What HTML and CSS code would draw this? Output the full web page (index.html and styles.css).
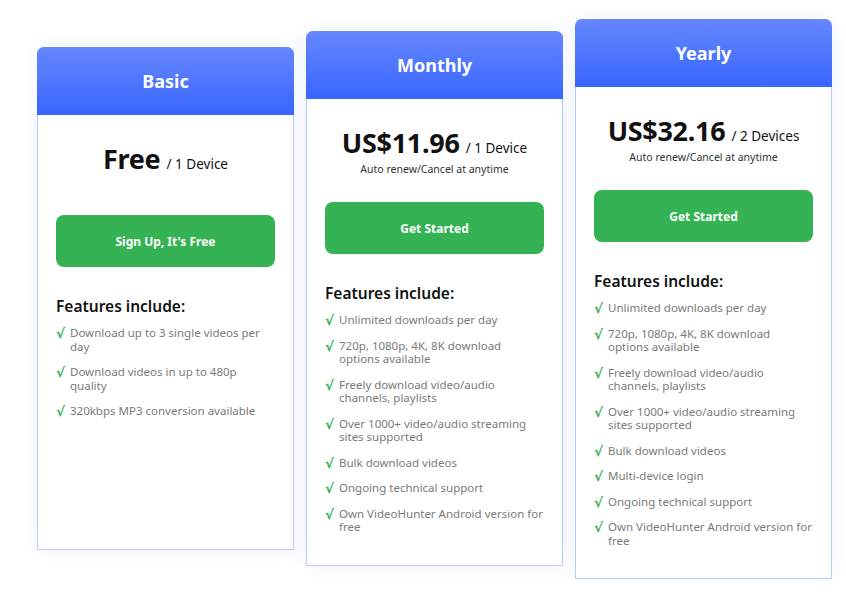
FILE: index.html
```html
<!DOCTYPE html>
<html lang="en">
<head>
    <meta charset="UTF-8">
    <meta name="viewport" content="width=device-width, initial-scale=1.0">
    <title>Pricing</title>
    <link rel="stylesheet" href="styles.css">
</head>
<body>
    <div class="plans">
        <div class="plan plan-basic">
            <div class="plan-header">Basic</div>
            <div class="plan-body">
                <div class="price-box">
                    <div class="price"><span class="amount">Free</span> <span class="unit">/ 1 Device</span></div>
                </div>
                <a class="btn" href="#">Sign Up, It's Free</a>
                <div class="features-title">Features include:</div>
                <ul class="features">
                    <li>Download up to 3 single videos per day</li>
                    <li>Download videos in up to 480p quality</li>
                    <li>320kbps MP3 conversion available</li>
                </ul>
            </div>
        </div>

        <div class="plan plan-monthly">
            <div class="plan-header">Monthly</div>
            <div class="plan-body">
                <div class="price-box">
                    <div class="price"><span class="amount">US$11.96</span> <span class="unit">/ 1 Device</span></div>
                    <div class="renew">Auto renew/Cancel at anytime</div>
                </div>
                <a class="btn" href="#">Get Started</a>
                <div class="features-title">Features include:</div>
                <ul class="features">
                    <li>Unlimited downloads per day</li>
                    <li>720p, 1080p, 4K, 8K download options available</li>
                    <li>Freely download video/audio channels, playlists</li>
                    <li>Over 1000+ video/audio streaming sites supported</li>
                    <li>Bulk download videos</li>
                    <li>Ongoing technical support</li>
                    <li>Own VideoHunter Android version for free</li>
                </ul>
            </div>
        </div>

        <div class="plan plan-yearly">
            <div class="plan-header">Yearly</div>
            <div class="plan-body">
                <div class="price-box">
                    <div class="price"><span class="amount">US$32.16</span> <span class="unit">/ 2 Devices</span></div>
                    <div class="renew">Auto renew/Cancel at anytime</div>
                </div>
                <a class="btn" href="#">Get Started</a>
                <div class="features-title">Features include:</div>
                <ul class="features">
                    <li>Unlimited downloads per day</li>
                    <li>720p, 1080p, 4K, 8K download options available</li>
                    <li>Freely download video/audio channels, playlists</li>
                    <li>Over 1000+ video/audio streaming sites supported</li>
                    <li>Bulk download videos</li>
                    <li>Multi-device login</li>
                    <li>Ongoing technical support</li>
                    <li>Own VideoHunter Android version for free</li>
                </ul>
            </div>
        </div>
    </div>
</body>
</html>
```

FILE: styles.css
```css
body {
    margin: 0;
    font-family: "Noto Sans", Arial, sans-serif;
    background-color: #fff;
    color: #111;
}
.plans {
    display: flex;
    align-items: flex-start;
    gap: 12px;
    padding: 19px 0 0 37px;
}
.plan {
    width: 255px;
    background-color: #fff;
    border: 1px solid #b5cbfd;
    border-radius: 7px 7px 0 0;
    box-shadow: 0 0 22px rgba(90, 130, 240, 0.09);
}
.plan-basic {
    margin-top: 28px;
    min-height: 501px;
}
.plan-monthly {
    margin-top: 12px;
}
.plan-header {
    height: 68px;
    margin: -1px -1px 0;
    border-radius: 7px 7px 0 0;
    background: linear-gradient(#6587fd, #3a65ff);
    color: #fff;
    font-size: 18px;
    font-weight: bold;
    display: flex;
    align-items: center;
    justify-content: center;
}
.plan-body {
    padding: 0 18px 19px;
}
.price-box {
    height: 103px;
    box-sizing: border-box;
    padding-top: 26px;
    text-align: center;
}
.plan-basic .price-box {
    height: 100px;
}
.price {
    line-height: 36px;
}
.amount {
    font-size: 27px;
    font-weight: bold;
    letter-spacing: -0.3px;
}
.unit {
    font-size: 13.5px;
    margin-left: 2px;
}
.renew {
    font-size: 10.5px;
    color: #333;
    margin-top: -4px;
}
.btn {
    display: flex;
    align-items: center;
    justify-content: center;
    height: 52px;
    background-color: #35b253;
    border-radius: 8px;
    color: #fff;
    text-decoration: none;
    font-size: 12px;
    font-weight: bold;
}
.features-title {
    margin-top: 28px;
    font-size: 15.5px;
    font-weight: 600;
    color: #111;
}
.features {
    list-style: none;
    margin: 9px 0 0;
    padding: 0 0 0 14px;
}
.features li {
    position: relative;
    font-size: 11.5px;
    line-height: 13.5px;
    color: #7a7a7a;
    margin-bottom: 12px;
}
.features li::before {
    content: "\221A";
    position: absolute;
    left: -14px;
    top: 1px;
    color: #35b253;
    font-family: "DejaVu Sans", sans-serif;
    font-size: 13.5px;
    font-weight: bold;
}
```
